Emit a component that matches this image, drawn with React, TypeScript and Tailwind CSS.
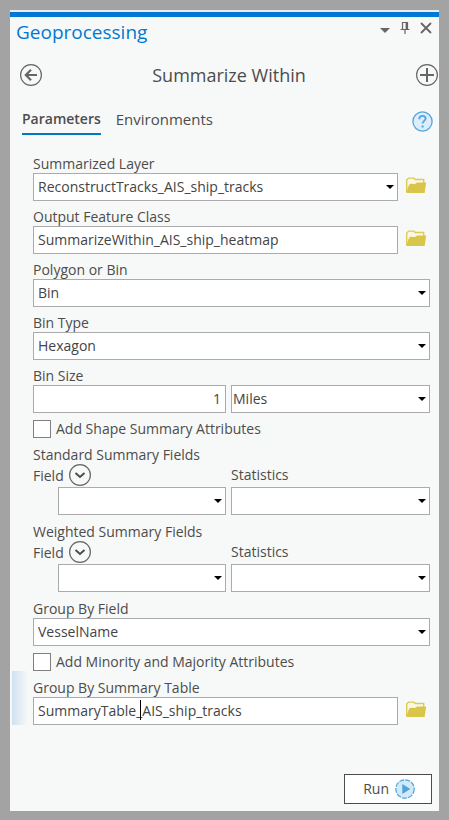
import { useState, type ReactNode } from "react"

const boxStyle =
  "block h-7 w-full rounded-none border border-[#ababab] bg-white text-[#444444] outline-none"

const CircleIcon = ({ children }: { children: ReactNode }) => (
  <svg width="24" height="24" viewBox="0 0 24 24" fill="none" stroke="#666666">
    <circle cx="12" cy="12" r="10.4" strokeWidth="1.2" />
    {children}
  </svg>
)

const FolderButton = ({ label }: { label: string }) => (
  <button type="button" aria-label={label} className="w-8 shrink-0 pb-1 pl-2">
    <svg width="21" height="17" viewBox="0 0 21 17">
      <path
        d="M.7 15V3L2.6 1.1h5.2l1.6 1.4h8.3V6"
        fill="#fbf8e2"
        stroke="#dccb58"
        strokeWidth="1.4"
      />
      <path d="M4 6.8 9 7l2-1.5h9.2L18.6 16H.2L2.5 9z" fill="#d9c54a" />
    </svg>
  </button>
)

type SelectProps = {
  id: string
  label?: string
  options: string[]
  padding?: string
}

const SelectBox = ({ id, label, options, padding = "pl-1" }: SelectProps) => (
  <div className="relative min-w-0 flex-1">
    <select
      id={id}
      aria-label={label}
      className={`${boxStyle} appearance-none pr-5 ${padding}`}
    >
      {options.map((option) => (
        <option key={option}>{option}</option>
      ))}
    </select>
    <svg
      className="pointer-events-none absolute top-3 right-1"
      width="8"
      height="4"
      viewBox="0 0 8 4"
    >
      <path d="M0 0h8L4 4z" fill="#000000" />
    </svg>
  </div>
)

const FieldLabel = ({ id, children }: { id: string; children: string }) => (
  <label htmlFor={id} className="block pt-0.5 leading-[18px]">
    {children}
  </label>
)

const CheckRow = ({ children }: { children: string }) => (
  <label className="flex items-center gap-[5px] pt-[7px] pb-1.5 leading-[18px]">
    <input
      type="checkbox"
      className="size-[18px] appearance-none border border-[#808080] bg-white checked:bg-[#0079c1]"
    />
    {children}
  </label>
)

const SummaryFields = ({ title, id }: { title: string; id: string }) => (
  <fieldset className="mb-1.5">
    <legend className="block pt-0.5 leading-[18px]">{title}</legend>
    <div className="grid grid-cols-[193fr_199fr] gap-x-[5px]">
      <div className="flex h-[23px] items-center gap-1">
        <label htmlFor={`${id}-field`}>Field</label>
        <button type="button" aria-label={`Add fields to ${title}`} className="pb-0.5">
          <CircleIcon>
            <path d="m7.5 10 4.5 4 4.5-4" stroke="#4d4d4d" strokeWidth="2" />
          </CircleIcon>
        </button>
      </div>
      <label htmlFor={`${id}-stat`} className="leading-[22px]">
        Statistics
      </label>
      <div className="flex pl-[25px]">
        <SelectBox id={`${id}-field`} options={[""]} />
      </div>
      <SelectBox id={`${id}-stat`} options={[""]} />
    </div>
  </fieldset>
)

const App = () => {
  const [output, setOutput] = useState("SummarizeWithin_AIS_ship_heatmap")
  const [size, setSize] = useState("1")
  const [table, setTable] = useState("SummaryTable_AIS_ship_tracks")

  return (
    <div className="flex min-h-screen bg-[#a3a3a3] px-2.5 pt-2.5 pb-[9px] font-['Open_Sans',sans-serif] text-sm text-[#4c4c4c]">
      <main className="flex flex-1 flex-col border-t-2 border-[#ececec] bg-[#f7f9f8]">
        <header className="flex h-8 items-start justify-between border-t-[5px] border-[#0078d4] pr-[7px] pl-1.5">
          <h1 className="text-[19px] leading-[30px] text-[#0078d4]">Geoprocessing</h1>
          <div className="flex pt-1">
            <button type="button" aria-label="Menu" className="mr-2.5">
              <svg width="10" height="14" viewBox="0 0 10 14">
                <path d="M0 7h10L5 12z" fill="#666666" />
              </svg>
            </button>
            <button type="button" aria-label="Auto hide" className="mr-2.5">
              <svg width="10" height="14" viewBox="0 0 10 14" fill="none" stroke="#666666">
                <path d="M2.5 8V1.5h5V8M.5 8.5h9M5 8.5V13" strokeWidth="1.2" />
                <path d="M6.5 1v7.5" strokeWidth="1.8" />
              </svg>
            </button>
            <button type="button" aria-label="Close">
              <svg width="12" height="14" viewBox="0 0 12 14">
                <path d="m1 2 10 10M11 2 1 12" stroke="#666666" strokeWidth="1.8" />
              </svg>
            </button>
          </div>
        </header>

        <div className="flex items-center justify-between pt-[18px] pl-[9px]">
          <button type="button" aria-label="Back">
            <CircleIcon>
              <path d="M18 12H7.5M12 6.7 6.8 12l5.2 5.3" strokeWidth="2.2" />
            </CircleIcon>
          </button>
          <h2 className="text-lg leading-[26px]">Summarize Within</h2>
          <button type="button" aria-label="Add">
            <CircleIcon>
              <path d="M12 5v14M5 12h14" strokeWidth="2" />
            </CircleIcon>
          </button>
        </div>

        <nav className="flex items-start gap-[15px] pt-[19px] pr-1.5 pl-3 text-[15px]">
          <button
            type="button"
            className="border-b-2 border-[#0079c1] pb-0.5 text-sm leading-6 font-semibold"
          >
            Parameters
          </button>
          <button type="button" className="leading-6">
            Environments
          </button>
          <button type="button" aria-label="Help" className="ml-auto pt-1">
            <svg width="21" height="21" viewBox="0 0 21 21" fill="none" stroke="#55a5dc">
              <circle cx="10.5" cy="10.5" r="9.6" fill="#dceefb" strokeWidth="1.3" />
              <path
                d="M7.4 8.2V7.5C7.4 5.8 8.7 4.9 10.5 4.9s3.1 1 3.1 2.6c0 2.3-3 2.5-3 5.1"
                strokeWidth="1.9"
              />
              <path d="M10.6 14.5v2" strokeWidth="2.1" />
            </svg>
          </button>
        </nav>

        <form
          className="flex flex-1 flex-col pt-[18px]"
          onSubmit={(e) => e.preventDefault()}
        >
          <div className="pr-[9px] pl-[23px]">
            <FieldLabel id="layer">Summarized Layer</FieldLabel>
            <div className="flex">
              <SelectBox id="layer" options={["ReconstructTracks_AIS_ship_tracks"]} />
              <FolderButton label="Browse summarized layer" />
            </div>

            <div className="pt-[5px]">
              <FieldLabel id="output">Output Feature Class</FieldLabel>
              <div className="flex">
                <input
                  id="output"
                  className={`${boxStyle} min-w-0 flex-1 px-1 pb-0.5`}
                  value={output}
                  onChange={(e) => setOutput(e.target.value)}
                />
                <FolderButton label="Browse output feature class" />
              </div>
            </div>

            <div className="pt-[5px]">
              <FieldLabel id="polygon">Polygon or Bin</FieldLabel>
              <SelectBox id="polygon" options={["Bin", "Polygon"]} />
            </div>

            <div className="pt-[5px]">
              <FieldLabel id="bin-type">Bin Type</FieldLabel>
              <SelectBox id="bin-type" options={["Hexagon", "Square"]} />
            </div>

            <div className="pt-[5px]">
              <FieldLabel id="bin-size">Bin Size</FieldLabel>
              <div className="grid grid-cols-[193fr_199fr] gap-x-[5px]">
                <input
                  id="bin-size"
                  className={`${boxStyle} min-w-0 px-1 pb-0.5 text-right`}
                  value={size}
                  onChange={(e) => setSize(e.target.value)}
                />
                <SelectBox
                  id="bin-unit"
                  label="Bin size unit"
                  options={["Miles", "Kilometers"]}
                  padding="pl-px"
                />
              </div>
            </div>

            <CheckRow>Add Shape Summary Attributes</CheckRow>
            <SummaryFields id="standard" title="Standard Summary Fields" />
            <SummaryFields id="weighted" title="Weighted Summary Fields" />

            <FieldLabel id="group">Group By Field</FieldLabel>
            <SelectBox id="group" options={["VesselName"]} />
            <CheckRow>Add Minority and Majority Attributes</CheckRow>

            <div className="relative">
              {/* active parameter marker */}
              <div className="absolute -top-1.5 bottom-0 -left-[21px] w-4 bg-linear-to-r from-[#cfe1f0] to-[#f7f9f8]" />
              <FieldLabel id="table">Group By Summary Table</FieldLabel>
              <div className="flex">
                <div className="relative min-w-0 flex-1">
                  <input
                    id="table"
                    className={`${boxStyle} px-1 pb-0.5`}
                    value={table}
                    onChange={(e) => setTable(e.target.value)}
                  />
                  <span className="absolute top-[3px] left-[107px] h-5 w-px bg-black" />
                </div>
                <FolderButton label="Browse summary table" />
              </div>
            </div>
          </div>

          <div className="mt-auto flex justify-end pt-4 pr-[7px] pb-[7px]">
            <button
              type="submit"
              className="flex h-[30px] w-[88px] items-center justify-end gap-1.5 border border-[#4c4c4c] bg-white pr-4"
            >
              Run
              <svg width="20" height="20" viewBox="0 0 20 20">
                <circle
                  cx="10"
                  cy="10"
                  r="9.2"
                  fill="#d3e9f8"
                  stroke="#4ea3dc"
                  strokeWidth="1.2"
                  strokeDasharray="5 1.2"
                />
                <path d="M7.3 5v10l8-5z" fill="#4ea3dc" />
              </svg>
            </button>
          </div>
        </form>
      </main>
    </div>
  )
}

export default App
